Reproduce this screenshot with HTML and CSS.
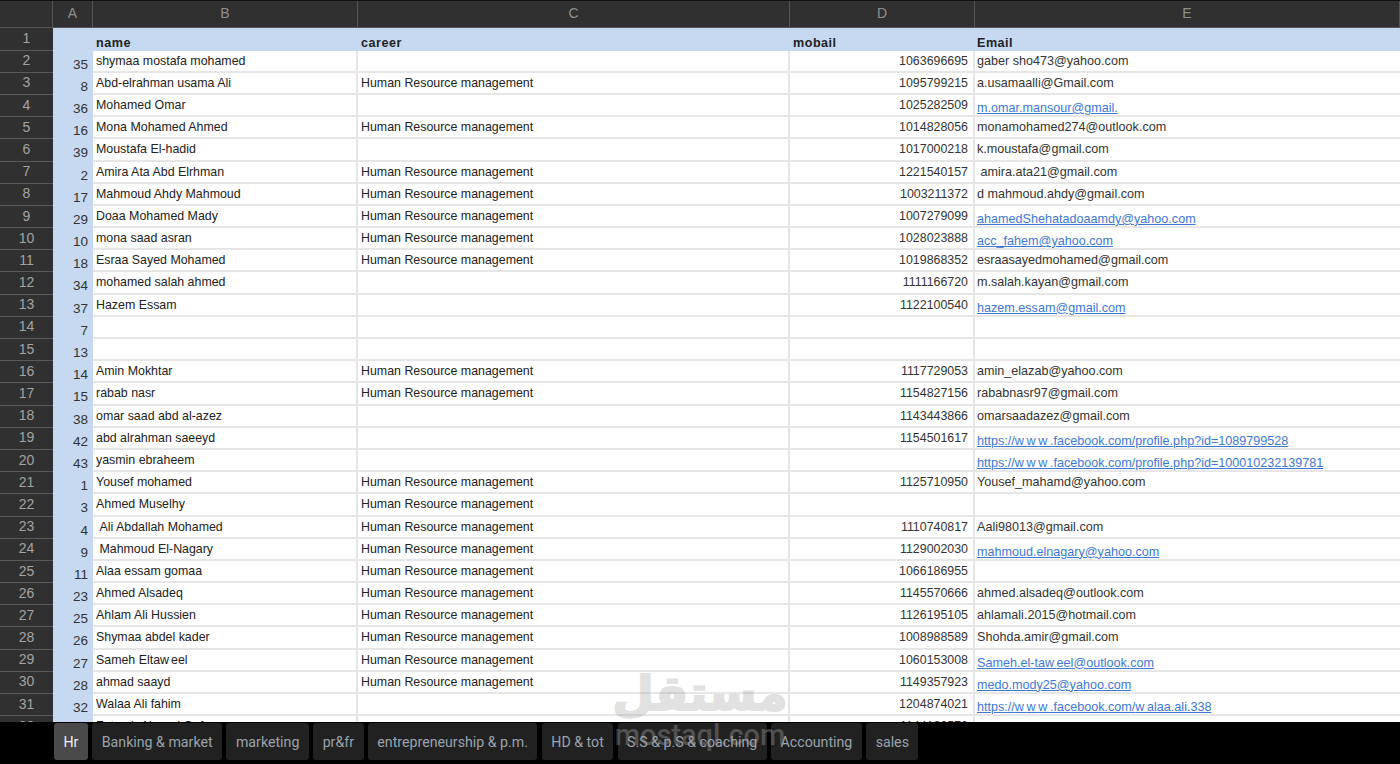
FILE: index.html
```html
<!DOCTYPE html>
<html lang="en">
<head>
<meta charset="utf-8">
<title>Hr</title>
<link rel="stylesheet" href="styles.css">
</head>
<body>
<div class="app">
  <div class="sheet">
    <div class="colheads">
      <div class="corner"></div><div class="colhead">A</div><div class="colhead">B</div><div class="colhead">C</div><div class="colhead">D</div><div class="colhead">E</div>
    </div>
    <div class="rows" id="rows"></div>
  </div>
  <div class="tabs">
    <div class="tab active">Hr</div>
    <div class="tab">Banking &amp; market</div>
    <div class="tab">marketing</div>
    <div class="tab">pr&amp;fr</div>
    <div class="tab">entrepreneurship &amp; p.m.</div>
    <div class="tab">HD &amp; tot</div>
    <div class="tab">S.S &amp; p.S &amp; coaching</div>
    <div class="tab">Accounting</div>
    <div class="tab">sales</div>
  </div>
  <div class="watermark"><div class="wm-ar">مستقل</div><div class="wm-en">mostaql.com</div></div>
</div>
<script src="data.js"></script>
</body>
</html>
```
FILE: data.js
```js
var H = "Human Resource management";
var data = [
["35","shymaa mostafa mohamed","","1063696695","gaber sho473@yahoo.com"],
["8","Abd-elrahman usama Ali",H,"1095799215","a.usamaalli@Gmail.com"],
["36","Mohamed Omar","","1025282509","*m.omar.mansour@gmail."],
["16","Mona Mohamed Ahmed",H,"1014828056","monamohamed274@outlook.com"],
["39","Moustafa El-hadid","","1017000218","k.moustafa@gmail.com"],
["2","Amira Ata Abd Elrhman",H,"1221540157","\u00a0amira.ata21@gmail.com"],
["17","Mahmoud Ahdy Mahmoud",H,"1003211372","d mahmoud.ahdy@gmail.com"],
["29","Doaa Mohamed Mady",H,"1007279099","*ahamedShehatadoaamdy@yahoo.com"],
["10","mona saad asran",H,"1028023888","*acc_fahem@yahoo.com"],
["18","Esraa Sayed Mohamed",H,"1019868352","esraasayedmohamed@gmail.com"],
["34","mohamed salah ahmed","","1111166720","m.salah.kayan@gmail.com"],
["37","Hazem Essam","","1122100540","*hazem.essam@gmail.com"],
["7","","","",""],
["13","","","",""],
["14","Amin Mokhtar",H,"1117729053","amin_elazab@yahoo.com"],
["15","rabab nasr",H,"1154827156","rababnasr97@gmail.com"],
["38","omar saad abd al-azez","","1143443866","omarsaadazez@gmail.com"],
["42","abd alrahman saeeyd","","1154501617","*https://www.facebook.com/profile.php?id=1089799528"],
["43","yasmin ebraheem","","","*https://www.facebook.com/profile.php?id=100010232139781"],
["1","Yousef mohamed",H,"1125710950","Yousef_mahamd@yahoo.com"],
["3","Ahmed Muselhy",H,"",""],
["4","\u00a0Ali Abdallah Mohamed",H,"1110740817","Aali98013@gmail.com"],
["9","\u00a0Mahmoud El-Nagary",H,"1129002030","*mahmoud.elnagary@yahoo.com"],
["11","Alaa essam gomaa",H,"1066186955",""],
["23","Ahmed Alsadeq",H,"1145570666","ahmed.alsadeq@outlook.com"],
["25","Ahlam Ali Hussien",H,"1126195105","ahlamali.2015@hotmail.com"],
["26","Shymaa abdel kader",H,"1008988589","Shohda.amir@gmail.com"],
["27","Sameh Eltaweel",H,"1060153008","*Sameh.el-taweel@outlook.com"],
["28","ahmad saayd",H,"1149357923","*medo.mody25@yahoo.com"],
["32","Walaa Ali fahim","","1204874021","*https://www.facebook.com/walaa.ali.338"],
["33","Fatmah Ahmed Ouf","","1144120572",""]
];
var root = document.getElementById("rows");
/* The source renders a loose gap after each lowercase w; reproduce it with spacing. */
function fill(el, text) {
  text.split(/(w)/).forEach(function (part) {
    if (part === "w") {
      var s = document.createElement("span");
      s.className = "wide";
      s.textContent = part;
      el.appendChild(s);
    } else if (part) {
      el.appendChild(document.createTextNode(part));
    }
  });
}
function cell(cls, text) {
  var d = document.createElement("div");
  d.className = "cell " + cls;
  fill(d, text);
  return d;
}
function addRow(num, vals, head) {
  var r = document.createElement("div");
  r.className = head ? "row head" : "row";
  var n = document.createElement("div");
  n.className = "rownum";
  n.textContent = num;
  r.appendChild(n);
  r.appendChild(cell("a", vals[0]));
  r.appendChild(cell("", vals[1]));
  r.appendChild(cell("", vals[2]));
  r.appendChild(cell("num", vals[3]));
  var e = vals[4], link = e.charAt(0) === "*";
  var ec = cell("mail" + (link ? " link" : ""), "");
  if (link) {
    var s = document.createElement("span");
    s.className = "url";
    fill(s, e.slice(1));
    ec.appendChild(s);
  } else {
    fill(ec, e);
  }
  r.appendChild(ec);
  root.appendChild(r);
}
addRow(1, ["", "name", "career", "mobail", "Email"], true);
data.forEach(function (v, i) { addRow(i + 2, v, false); });
```
FILE: styles.css
```css
* { box-sizing: border-box; }
html, body { margin: 0; height: 100%; background: #000; overflow: hidden; }
.app { position: relative; width: 1400px; height: 764px; display: flex; flex-direction: column; font-family: "Liberation Sans", Arial, sans-serif; }
.sheet { height: 722px; overflow: hidden; background: #fff; flex: none; }
.colheads, .row { display: grid; grid-template-columns: 53px 40px 265px 432px 185px 425px; }
.colheads { height: 28px; background: #303030; border-top: 1px solid #111; border-bottom: 1px solid #555; }
.corner { border-right: 1px solid #555; }
.colhead { display: flex; align-items: center; justify-content: center; color: #8f8f8f; font-size: 14px; border-right: 1px solid #555; padding-bottom: 2px; }
.row { height: 22.2px; }
.rownum { display: flex; align-items: center; justify-content: center; background: #303030; color: #a3a3a3; font-size: 14px; border-bottom: 1px solid #5a5a5a; padding-bottom: 2px; }
.cell { font-size: 12.4px; color: #222; padding: 0 3px; white-space: nowrap; overflow: hidden; border-right: 2px solid #e6e6e6; border-bottom: 2px solid #e6e6e6; line-height: 20px; }
.cell.a { background: #c6d9f1; border: 0; text-align: right; font-size: 13.5px; line-height: 28px; padding-right: 5px; color: #333; }
.cell.num { text-align: right; color: #333; padding-right: 5px; }
.cell.mail { color: #333; border-right: 0; font-size: 12.6px; padding-left: 2px; }
.cell.link { color: #3d78d8; line-height: 27px; }
.url { text-decoration: underline; }
.wide { letter-spacing: 2px; }
.url .wide { letter-spacing: 2.6px; }
.row.head .cell { background: #c6d9f1; border: 0; font-weight: 700; line-height: 30px; letter-spacing: 0.5px; color: #222; font-size: 12.6px; }
.row.head .wide { letter-spacing: 0.5px; }
.row.head { height: 22.6px; }
.row.head .cell.num { text-align: left; }
.tabs { flex: 1; display: flex; gap: 4.3px; padding: 1px 0 4px 54px; background: #000; }
.tab { display: flex; align-items: center; padding: 0 9.5px; background: #212121; color: #9aa3ad; font-family: Roboto, sans-serif; font-size: 14.2px; border-radius: 3px; white-space: nowrap; }
.tab.active { background: #4a4a4a; color: #f1f1f1; }
.watermark { position: absolute; left: 600px; top: 664px; width: 200px; text-align: center; pointer-events: none; color: #aaa; opacity: 0.35; }
.wm-ar { font-family: "DejaVu Sans", sans-serif; font-weight: 700; font-size: 48px; line-height: 58px; -webkit-text-stroke: 2px #aaa; }
.wm-en { font-family: Roboto, sans-serif; font-weight: 500; font-size: 29px; line-height: 26px; }
```
